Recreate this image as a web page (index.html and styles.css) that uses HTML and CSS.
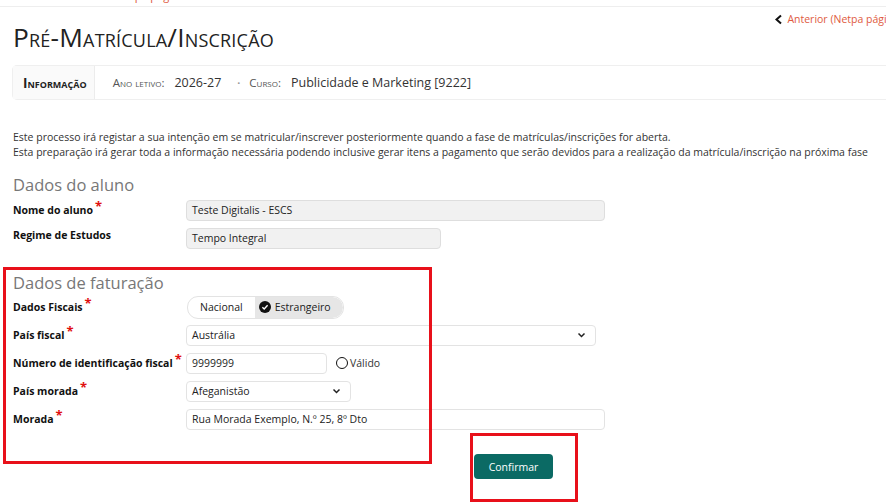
FILE: index.html
```html
<!DOCTYPE html>
<html lang="pt">
<head>
    <meta charset="UTF-8">
    <meta name="viewport" content="width=device-width, initial-scale=1.0">
    <title>Pré-Matrícula/Inscrição</title>
    <link rel="stylesheet" href="styles.css">
</head>
<body>
    <div class="topbar"><span class="crumb">Início › Netpa página</span></div>

    <div class="page">
        <div class="back-row">
            <a class="back-link" href="#">
                <svg width="9" height="11" viewBox="0 0 9 11"><path d="M7 1.5 L2.5 5.5 L7 9.5" fill="none" stroke="#111" stroke-width="2"/></svg>
                Anterior (Netpa página)
            </a>
        </div>

        <h1 class="title">Pré-Matrícula/Inscrição</h1>

        <div class="info-bar">
            <div class="info-label">Informação</div>
            <div class="info-items">
                <span class="info-key">Ano letivo:</span>
                <span class="info-value">2026-27</span>
                <span class="info-dot">•</span>
                <span class="info-key">Curso:</span>
                <span class="info-value">Publicidade e Marketing [9222]</span>
            </div>
        </div>

        <div class="intro">
            <p>Este processo irá registar a sua intenção em se matricular/inscrever posteriormente quando a fase de matrículas/inscrições for aberta.</p>
            <p>Esta preparação irá gerar toda a informação necessária podendo inclusive gerar itens a pagamento que serão devidos para a realização da matrícula/inscrição na próxima fase</p>
        </div>

        <section class="form-section">
            <h2>Dados do aluno</h2>
            <div class="form-row">
                <label class="req">Nome do aluno</label>
                <div class="field readonly w-full">Teste Digitalis - ESCS</div>
            </div>
            <div class="form-row">
                <label>Regime de Estudos</label>
                <div class="field readonly w-mid">Tempo Integral</div>
            </div>
        </section>

        <section class="form-section billing">
            <h2>Dados de faturação</h2>
            <div class="form-row">
                <label class="req">Dados Fiscais</label>
                <div class="toggle">
                    <span class="toggle-opt">Nacional</span>
                    <span class="toggle-opt active">
                        <svg width="12" height="12" viewBox="0 0 12 12"><circle cx="6" cy="6" r="6" fill="#111"/><path d="M3.4 6.2 L5.2 7.9 L8.6 4.3" fill="none" stroke="#fff" stroke-width="1.4"/></svg>
                        Estrangeiro
                    </span>
                </div>
            </div>
            <div class="form-row">
                <label class="req">País fiscal</label>
                <div class="field select w-select">Austrália<svg width="9" height="6" viewBox="0 0 9 6"><path d="M1.5 1.5 L4.5 4.5 L7.5 1.5" fill="none" stroke="#222" stroke-width="1.5"/></svg></div>
            </div>
            <div class="form-row">
                <label class="req">Número de identificação fiscal</label>
                <div class="field w-nif">9999999</div>
                <span class="valid"><span class="radio"></span>Válido</span>
            </div>
            <div class="form-row">
                <label class="req">País morada</label>
                <div class="field select w-small">Afeganistão<svg width="9" height="6" viewBox="0 0 9 6"><path d="M1.5 1.5 L4.5 4.5 L7.5 1.5" fill="none" stroke="#222" stroke-width="1.5"/></svg></div>
            </div>
            <div class="form-row">
                <label class="req">Morada</label>
                <div class="field w-full">Rua Morada Exemplo, N.º 25, 8º Dto</div>
            </div>
        </section>

        <div class="actions">
            <button class="btn-confirm">Confirmar</button>
        </div>
    </div>

    <div class="mark mark-billing"></div>
    <div class="mark mark-confirm"></div>
</body>
</html>
```

FILE: styles.css
```css
body {
    margin: 0;
    font-family: 'Open Sans', 'DejaVu Sans', sans-serif;
    color: #222;
    background: #fff;
    position: relative;
    overflow: hidden;
    height: 503px;
}
.topbar {
    height: 6px;
    border-bottom: 1px solid #eee;
    overflow: hidden;
    padding-left: 80px;
}
.crumb {
    display: block;
    font-size: 11px;
    line-height: 11px;
    margin-top: -10px;
    color: #e05a3e;
}
.page {
    padding: 0 0 0 13px;
}
.back-row {
    display: flex;
    justify-content: flex-end;
    margin-top: 5px;
    white-space: nowrap;
    overflow: hidden;
}
.back-link {
    display: flex;
    align-items: center;
    flex-shrink: 0;
    gap: 4px;
    margin-right: -16px;
    font-size: 10.5px;
    color: #e05a3e;
    text-decoration: none;
}
.title {
    margin: -4px 0 0;
    font-size: 26.3px;
    line-height: 30px;
    font-weight: 400;
    font-variant: small-caps;
    letter-spacing: 0.2px;
    color: #222;
}
.info-bar {
    display: flex;
    align-items: stretch;
    margin-top: 13px;
    margin-left: -1px;
    height: 35px;
    box-sizing: border-box;
    border: 1px solid #efefef;
    border-right: none;
    border-radius: 5px 0 0 5px;
}
.info-label {
    display: flex;
    align-items: center;
    padding: 0 7px 0 10px;
    background: #fafafa;
    border-right: 1px solid #ececec;
    font-weight: 700;
    font-variant: small-caps;
    font-size: 13.5px;
    color: #222;
}
.info-items {
    display: flex;
    align-items: center;
    gap: 10px;
    padding-left: 18px;
}
.info-key {
    font-variant: small-caps;
    font-size: 11.5px;
    color: #555;
}
.info-value {
    font-size: 12.5px;
    color: #333;
}
.info-dot {
    font-size: 8px;
    color: #999;
    margin: 0 -1px 0 6px;
}
.intro {
    margin-top: 30px;
}
.intro p {
    margin: 0;
    font-size: 10.5px;
    line-height: 15px;
    color: #333;
}
.form-section h2 {
    margin: 15px 0 1px;
    font-size: 16.5px;
    line-height: 20px;
    font-weight: 400;
    color: #777;
}
.billing h2 {
    margin-top: 21px;
    margin-bottom: 0;
}
.form-row {
    display: flex;
    align-items: center;
    height: 28px;
}
.form-row label {
    width: 173px;
    flex-shrink: 0;
    font-size: 10.5px;
    font-weight: 700;
    color: #111;
    align-self: flex-start;
    padding-top: 4px;
}
.form-row label.req::after {
    content: "*";
    color: #e01010;
    font-size: 13px;
    position: relative;
    top: -3px;
    margin-left: 2px;
}
.field {
    box-sizing: border-box;
    height: 21px;
    display: flex;
    align-items: center;
    justify-content: space-between;
    padding: 0 5px;
    border: 1px solid #e3e3e3;
    border-radius: 4px;
    font-size: 10.5px;
    color: #222;
    background: #fff;
}
.field.readonly {
    background: #f1f1f1;
    border-color: #dedede;
}
.select svg {
    margin-right: 4px;
}
.w-full { width: 419px; }
.w-mid { width: 255px; }
.w-select { width: 410px; }
.w-nif { width: 141px; }
.w-small { width: 165px; }
.toggle {
    display: flex;
    height: 21px;
    border: 1px solid #e3e3e3;
    border-radius: 11px;
    overflow: hidden;
    margin-left: 1px;
}
.toggle-opt {
    display: flex;
    align-items: center;
    gap: 4px;
    padding: 0 12px;
    font-size: 10.5px;
    color: #222;
}
.toggle-opt.active {
    background: #e6e6e6;
    padding: 0 12px 0 4px;
    border-radius: 0 11px 11px 0;
}
.valid {
    display: flex;
    align-items: center;
    gap: 2px;
    margin-left: 9px;
    font-size: 10.5px;
    color: #333;
}
.radio {
    width: 10px;
    height: 10px;
    border: 1.5px solid #111;
    border-radius: 50%;
}
.actions {
    display: flex;
    margin-top: 21px;
    padding-left: 461px;
}
.btn-confirm {
    width: 79px;
    height: 25px;
    border: none;
    border-radius: 4px;
    background: #0b6a64;
    color: #fff;
    font-family: inherit;
    font-size: 10.5px;
}
.mark {
    position: absolute;
    border: 3px solid #e8101a;
    box-sizing: border-box;
    pointer-events: none;
}
.mark-billing {
    left: 3px;
    top: 267px;
    width: 429px;
    height: 197px;
}
.mark-confirm {
    left: 470px;
    top: 433px;
    width: 108px;
    height: 69px;
}
```
